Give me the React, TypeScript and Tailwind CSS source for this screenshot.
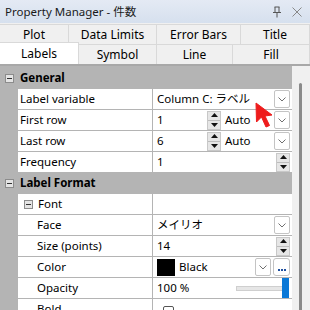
import React from "react";

const font = { fontFamily: '"Noto Sans", "Noto Sans CJK JP", sans-serif' };

function MinusBox() {
  return (
    <div className="flex h-[9px] w-[9px] items-center justify-center border border-[#8c8c8c] bg-[#e4e4e4]">
      <div className="h-px w-[5px] bg-[#333]" />
    </div>
  );
}

function DropButton() {
  return (
    <div className="flex h-[18px] w-[16px] items-center justify-center rounded-[2px] border border-[#c4c4c4] bg-white">
      <svg width="8" height="5" viewBox="0 0 8 5">
        <path d="M0.5 0.5 L4 4 L7.5 0.5" fill="none" stroke="#707070" strokeWidth="1" />
      </svg>
    </div>
  );
}

function Spinner() {
  return (
    <div className="flex h-[19px] w-[14px] flex-col gap-px border border-[#c8c8c8] bg-[#e6e6e6]">
      <div className="flex flex-1 items-center justify-center">
        <svg width="7" height="4" viewBox="0 0 7 4">
          <path d="M0 4 L3.5 0 L7 4 Z" fill="#111" />
        </svg>
      </div>
      <div className="h-px bg-[#bdbdbd]" />
      <div className="flex flex-1 items-center justify-center">
        <svg width="7" height="4" viewBox="0 0 7 4">
          <path d="M0 0 L3.5 4 L7 0 Z" fill="#111" />
        </svg>
      </div>
    </div>
  );
}

function Category({ label }: { label: string }) {
  return (
    <div className="flex h-[20px] items-center bg-[#b4b4b4]">
      <div className="flex w-[18px] justify-center pl-px">
        <MinusBox />
      </div>
      <span className="pl-[2px] text-[11.5px] font-bold text-black">{label}</span>
    </div>
  );
}

function Row({
  label,
  indent,
  sub,
  children,
}: {
  label: string;
  indent?: boolean;
  sub?: boolean;
  children?: React.ReactNode;
}) {
  return (
    <div className="flex h-[20px] bg-[#b4b4b4]">
      <div className="w-[18px]" />
      <div className="flex w-[134px] items-center bg-white text-[11.5px] text-black">
        {sub ? (
          <>
            <div className="ml-[6px] mr-[5px]">
              <MinusBox />
            </div>
            <span>{label}</span>
          </>
        ) : (
          <span className={indent ? "pl-[19px]" : "pl-[2px]"}>{label}</span>
        )}
      </div>
      <div className="ml-px flex flex-1 items-center bg-white pl-[4px] pr-[2px] text-[11.5px] text-black">
        {children}
      </div>
    </div>
  );
}

function Tab({ label, w, active }: { label: string; w: string; active?: boolean }) {
  return (
    <div
      className={`${w} flex items-center justify-center border-r border-t border-[#d9d9d9] text-[12px] text-black ${
        active ? "relative -mt-[2px] h-[22px] bg-white" : "h-[20px] bg-[#f0f0f0]"
      }`}
    >
      {label}
    </div>
  );
}

export default function App() {
  return (
    <div className="relative h-[310px] w-[310px] overflow-hidden bg-[#f0f0f0]" style={font}>
      {/* title bar */}
      <div className="flex h-[23px] items-center bg-gradient-to-b from-[#e4eaf4] to-[#d6e0ee] pl-[5px] pr-[8px]">
        <span className="flex-1 text-[11.5px] text-[#1a1a1a]">Property Manager - 件数</span>
        <svg width="10" height="12" viewBox="0 0 10 12" className="mr-[10px]">
          <path d="M2.5 1 H7.5 M3 1 V6 M7 1 V6 M1 6.5 H9 M5 6.5 V11.5" fill="none" stroke="#555" strokeWidth="1" />
        </svg>
        <svg width="10" height="10" viewBox="0 0 10 10">
          <path d="M0.5 0.5 L9.5 9.5 M9.5 0.5 L0.5 9.5" stroke="#888" strokeWidth="1" />
        </svg>
      </div>

      {/* tabs */}
      <div className="flex pt-px">
        <Tab label="Plot" w="w-[69px]" />
        <Tab label="Data Limits" w="w-[88px]" />
        <Tab label="Error Bars" w="w-[84px]" />
        <Tab label="Title" w="flex-1" />
      </div>
      <div className="flex h-[20px] items-end">
        <Tab label="Labels" w="w-[79px]" active />
        <Tab label="Symbol" w="w-[78px]" />
        <Tab label="Line" w="w-[76px]" />
        <Tab label="Fill" w="flex-1" />
      </div>

      {/* property grid */}
      <div className="flex border-t-[2px] border-[#a8a8a8]">
        <div className="flex w-[292px] flex-col gap-px bg-[#b4b4b4] pt-[2px]">
          <Category label="General" />
          <Row label="Label variable">
            <span className="flex-1">Column C: ラベル</span>
            <DropButton />
          </Row>
          <Row label="First row">
            <span className="w-[50px]">1</span>
            <Spinner />
            <span className="ml-[4px] flex-1">Auto</span>
            <DropButton />
          </Row>
          <Row label="Last row">
            <span className="w-[50px]">6</span>
            <Spinner />
            <span className="ml-[4px] flex-1">Auto</span>
            <DropButton />
          </Row>
          <Row label="Frequency">
            <span className="flex-1">1</span>
            <Spinner />
          </Row>
          <Category label="Label Format" />
          <Row label="Font" sub />
          <Row label="Face" indent>
            <span className="flex-1">メイリオ</span>
            <DropButton />
          </Row>
          <Row label="Size (points)" indent>
            <span className="flex-1">14</span>
            <Spinner />
          </Row>
          <Row label="Color" indent>
            <div className="mr-[4px] h-[17px] w-[18px] bg-black" />
            <span className="flex-1">Black</span>
            <DropButton />
            <div className="ml-[2px] flex h-[18px] w-[17px] items-end justify-center gap-px rounded-[3px] border border-[#c4c4c4] bg-white pb-[4px]">
              <div className="h-[2px] w-[2px] bg-[#1f4f9f]" />
              <div className="h-[2px] w-[2px] bg-[#1f4f9f]" />
              <div className="h-[2px] w-[2px] bg-[#1f4f9f]" />
            </div>
          </Row>
          <Row label="Opacity" indent>
            <span className="flex-1">100 %</span>
            <div className="relative mr-[1px] flex h-[20px] w-[53px] items-center">
              <div className="h-[5px] w-full border border-[#cfcfcf] bg-[#e6e6e6]" />
              <div className="absolute right-0 top-0 h-[20px] w-[7px] bg-[#0a78d7]" />
            </div>
          </Row>
          <Row label="Bold" indent>
            <div className="ml-[6px] mt-[6px] h-[12px] w-[11px] rounded-[2px] border border-[#555] bg-white" />
          </Row>
        </div>
        {/* scroll bar */}
        <div className="flex w-[18px] justify-center bg-[#f0f0f0] pt-[17px]">
          <div className="ml-[-2px] h-[260px] w-[3px] rounded-full bg-[#8a8a8a]" />
        </div>
      </div>

      {/* mouse cursor */}
      <svg width="20" height="28" viewBox="0 0 20 28" className="absolute left-[255px] top-[102px]">
        <path d="M1 1 L1.5 20 L6.5 15 L11 25 L14.5 23.5 L10 14 L17 13 Z" fill="#ee1c1c" stroke="#ee1c1c" strokeWidth="1" strokeLinejoin="round" />
      </svg>
    </div>
  );
}
